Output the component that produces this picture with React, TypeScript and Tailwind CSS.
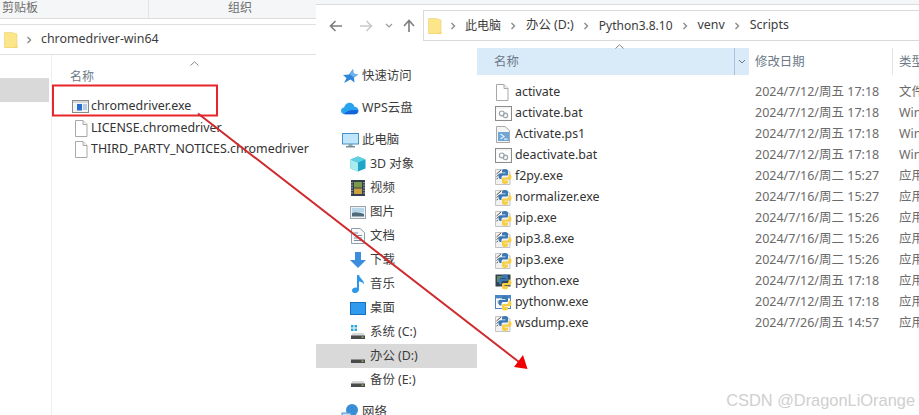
import React from "react";

const Chevron = ({ c = "#8a8a8a" }: { c?: string }) => (
  <svg width="6" height="8" viewBox="0 0 6 8" className="shrink-0"><path d="M1.5 1 L4.5 4 L1.5 7" fill="none" stroke={c} strokeWidth="1.4" /></svg>
);

const Folder = () => (
  <svg width="14" height="18" viewBox="0 0 14 18" className="shrink-0">
    <path d="M0.5 1.5 H8 L13 3 V16.5 H0.5 Z" fill="#fde68a" stroke="#e8cf7a" strokeWidth="0.6" />
    <path d="M11 14.5 H13.5 V17 H1 V16 H11 Z" fill="#f6d776" />
  </svg>
);

const Blank = () => (
  <svg width="14" height="17" viewBox="0 0 14 17"><path d="M1.5 .5 H9 L13 4.5 V16.5 H1.5 Z" fill="#fff" stroke="#a8a8a8" /><path d="M9 .5 V4.5 H13" fill="#f0f0f0" stroke="#a8a8a8" /></svg>
);

const Bat = () => (
  <svg width="17" height="15" viewBox="0 0 17 15">
    <rect x=".5" y=".5" width="16" height="14" fill="#f5f5f5" stroke="#8c8c8c" />
    <rect x="1.5" y="3" width="14" height="10.5" fill="#fff" />
    <circle cx="6.8" cy="7.4" r="2.4" fill="none" stroke="#9aa4ac" strokeWidth="1.2" />
    <circle cx="10.4" cy="9.4" r="2.2" fill="none" stroke="#9aa4ac" strokeWidth="1.2" />
  </svg>
);

const Ps = () => (
  <svg width="16" height="17" viewBox="0 0 16 17">
    <path d="M1.5 .5 H10 L14.5 4.5 V16.5 H1.5 Z" fill="#f5f5f5" stroke="#a8a8a8" />
    <rect x="3" y="6" width="11" height="9" fill="#6ea6d8" />
    <path d="M5.5 8 L9 10.5 L5.5 13 M9 13.2 H12.5" fill="none" stroke="#e6f1fa" strokeWidth="1.2" />
  </svg>
);

const Snakes = () => (
  <g>
    <path d="M10 2 C7.5 2 7 3 7 4 V5.5 H10.5 V6.2 H5.5 C4 6.2 3.5 7.5 3.5 9 C3.5 10.5 4 12 5.5 12 H6.5 V10.3 C6.5 9 7.5 8.5 8.5 8.5 H11.5 C12.5 8.5 13 8 13 7 V4 C13 3 12 2 10 2 Z" fill="#3a78b5" />
    <path d="M10 17 C12.5 17 13 16 13 15 V13.5 H9.5 V12.8 H14.5 C16 12.8 16.5 11.5 16.5 10 C16.5 8.5 16 7 14.5 7 H13.5 V8.7 C13.5 10 12.5 10.5 11.5 10.5 H8.5 C7.5 10.5 7 11 7 12 V15 C7 16 8 17 10 17 Z" fill="#f6cf45" />
  </g>
);

const PyFile = () => (
  <svg width="17" height="17" viewBox="0 0 17 17">
    <path d="M.5 1.5 H11 L15 4 V16.5 H.5 Z" fill="#f1f1f1" stroke="#c4c4c4" />
    <path d="M1.5 6 L6 2 M1.5 8.5 L4 6.5 M1.5 11 L3 10" stroke="#555" strokeWidth="1" />
    <g transform="translate(0,-1)"><Snakes /></g>
  </svg>
);

const PyExe = () => (
  <svg width="17" height="16" viewBox="0 0 17 16">
    <rect x=".5" y=".5" width="15" height="12" fill="#33424e" />
    <path d="M2 3 H7 M2 5 H5 M2 7 H4" stroke="#8fd08f" strokeWidth="1" />
    <g transform="translate(0,-1.5)"><Snakes /></g>
  </svg>
);

const PyW = () => (
  <svg width="17" height="16" viewBox="0 0 17 16">
    <rect x=".5" y=".5" width="15" height="13" fill="#fff" stroke="#4a86c5" />
    <rect x="1" y="1" width="14" height="2.4" fill="#4a86c5" />
    <path d="M2.5 6 H6 M2.5 8 H4.5" stroke="#888" strokeWidth="1" />
    <g transform="translate(0,-1.5)"><Snakes /></g>
  </svg>
);

const ExeIcon = () => (
  <svg width="17" height="13" viewBox="0 0 17 13">
    <rect x=".5" y=".5" width="16" height="12" fill="#f4f4f4" stroke="#8a8a8a" />
    <rect x="1" y="1" width="15" height="2" fill="#d8d8d8" />
    <rect x="5" y="4" width="5" height="6.5" fill="#2a6fd0" />
    <path d="M11 5 H15 M11 7 H15 M11 9 H15" stroke="#7aa8dc" strokeWidth="1" />
  </svg>
);

const Drive = ({ win }: { win?: boolean }) => (
  <svg width="16" height="16" viewBox="0 0 16 16">
    {win && <path d="M1 1 H3.5 V3.5 H1 Z M4.5 1 H7 V3.5 H4.5 Z M1 4.5 H3.5 V7 H1 Z M4.5 4.5 H7 V7 H4.5 Z" fill="#28a8d8" />}
    <path d="M2.5 9 H13.5 L15 12 H1 Z" fill="#d8d8d8" />
    <rect x="1" y="11.5" width="14" height="3.5" fill="#4a4a4a" />
    <rect x="11.5" y="12.5" width="2" height="1.2" fill="#9ad06a" />
  </svg>
);

type NI = { label: string; icon: React.ReactNode; indent?: boolean; active?: boolean; gap?: boolean };

const nav: NI[] = [
  { label: "快速访问", icon: <svg width="17" height="16" viewBox="0 0 17 16"><path d="M11 1 L11.5 5.5 L16 6.5 L12 9.5 L12.5 14.5 L8.5 11.5 L2 15 L4.5 10 L1 7 L7 6.5 Z" fill="#2f86d8" /><path d="M11 1 L11.5 5.5 L16 6.5 L12 9.5 L8 6.5 Z" fill="#6db4ee" /></svg> },
  { label: "WPS云盘", gap: true, icon: <svg width="18" height="13" viewBox="0 0 20 14"><path d="M5 13.5 C1.5 13.5 0 11.5 0 9.5 C0 7.5 1.5 6 3.5 6 C4 3 6.5 .5 9.5 .5 C12.5 .5 14.5 2.5 15 5 C17.5 5 19.5 7 19.5 9.5 C19.5 12 17.5 13.5 15 13.5 Z" fill="#2aa3ef" /><path d="M3 13 C7 9 12 8 19 9 C19 12 17.5 13.5 15 13.5 H5 Z" fill="#1764d8" /></svg> },
  { label: "此电脑", gap: true, icon: <svg width="17" height="15" viewBox="0 0 17 15"><rect x=".5" y=".5" width="16" height="10.5" fill="#bfe6fb" stroke="#4a90c8" /><rect x="6.5" y="11" width="4" height="2" fill="#8aa" /><rect x="4" y="13" width="9" height="1.5" fill="#7d8c96" /></svg> },
  { label: "3D 对象", indent: true, icon: <svg width="16" height="16" viewBox="0 0 16 16"><path d="M8 .5 L15.5 3.5 V12.5 L8 15.5 L.5 12.5 V3.5 Z" fill="#1fa5c8" /><path d="M.5 3.5 L8 6.5 V15.5 L.5 12.5 Z" fill="#a8ecf2" /><path d="M8 .5 L15.5 3.5 L8 6.5 L.5 3.5 Z" fill="#5fd0e2" /></svg> },
  { label: "视频", indent: true, icon: <svg width="14" height="16" viewBox="0 0 14 16"><rect width="14" height="16" fill="#33404c" /><rect x="3" y="2" width="8" height="5.5" fill="#7a9a4a" /><rect x="3" y="8.5" width="8" height="5.5" fill="#c8a040" /><path d="M1 2 V14 M13 2 V14" stroke="#dde" strokeWidth="1" strokeDasharray="1.2 1.4" /></svg> },
  { label: "图片", indent: true, icon: <svg width="16" height="13" viewBox="0 0 16 13"><rect x=".5" y=".5" width="15" height="12" fill="#eef2f5" stroke="#9aa5ad" /><rect x="2" y="2" width="12" height="4.5" fill="#b8d6ea" /><path d="M2 10.5 V7 C6 5.5 10 7 14 8 V10.5 Z" fill="#4f6b7a" /></svg> },
  { label: "文档", indent: true, icon: <svg width="14" height="16" viewBox="0 0 14 16"><path d="M.5 .5 H9 L13.5 4.5 V15.5 H.5 Z" fill="#f8f8f8" stroke="#8aa0b5" /><path d="M3 5 H7 M3 7.5 H11 M3 10 H11 M3 12.5 H11" stroke="#7a8fa5" strokeWidth="1" /></svg> },
  { label: "下载", indent: true, icon: <svg width="16" height="16" viewBox="0 0 16 16"><path d="M5 0 H11 V8 H16 L8 16 L0 8 H5 Z" fill="#3b8ede" /></svg> },
  { label: "音乐", indent: true, icon: <svg width="13" height="18" viewBox="0 0 13 18"><path d="M5 0 H7 C7.5 3.5 12.5 5 12 9.5 C11 7.5 9 6.5 7 6.5 V14.5 C7 16.5 5 18 3 18 C1 18 0 16.8 0 15.4 C0 13.8 1.8 12.5 3.5 12.5 C4 12.5 4.6 12.6 5 12.9 Z" fill="#2d97e8" /></svg> },
  { label: "桌面", indent: true, icon: <svg width="16" height="13" viewBox="0 0 16 13"><rect x=".5" y=".5" width="15" height="12" fill="#2f9bef" stroke="#1670c0" /></svg> },
  { label: "系统 (C:)", indent: true, icon: <Drive win /> },
  { label: "办公 (D:)", indent: true, active: true, icon: <Drive /> },
  { label: "备份 (E:)", indent: true, icon: <Drive /> },
  { label: "网络", gap: true, icon: <svg width="18" height="16" viewBox="0 0 18 16"><circle cx="11" cy="6" r="6" fill="#3a8ed8" /><rect x="1" y="9" width="9" height="6" fill="#bfe0f6" stroke="#4a90c8" /></svg> },
];

const files: [string, React.ReactNode, string, string][] = [
  ["activate", <Blank />, "2024/7/12/周五 17:18", "文件"],
  ["activate.bat", <Bat />, "2024/7/12/周五 17:18", "Win"],
  ["Activate.ps1", <Ps />, "2024/7/12/周五 17:18", "Win"],
  ["deactivate.bat", <Bat />, "2024/7/12/周五 17:18", "Win"],
  ["f2py.exe", <PyFile />, "2024/7/16/周二 15:27", "应用"],
  ["normalizer.exe", <PyFile />, "2024/7/16/周二 15:27", "应用"],
  ["pip.exe", <PyFile />, "2024/7/16/周二 15:26", "应用"],
  ["pip3.8.exe", <PyFile />, "2024/7/16/周二 15:26", "应用"],
  ["pip3.exe", <PyFile />, "2024/7/16/周二 15:26", "应用"],
  ["python.exe", <PyExe />, "2024/7/12/周五 17:18", "应用"],
  ["pythonw.exe", <PyW />, "2024/7/12/周五 17:18", "应用"],
  ["wsdump.exe", <PyFile />, "2024/7/26/周五 14:57", "应用"],
];

const leftFiles: [string, React.ReactNode][] = [
  ["chromedriver.exe", <ExeIcon />],
  ["LICENSE.chromedriver", <Blank />],
  ["THIRD_PARTY_NOTICES.chromedriver", <Blank />],
];

const Caret = () => (
  <svg width="9" height="5" viewBox="0 0 9 5"><path d="M.5 4.5 L4.5 .8 L8.5 4.5" fill="none" stroke="#888" /></svg>
);

export default function App() {
  return (
    <div className="relative flex w-[919px] h-[415px] overflow-hidden bg-white text-[12.4px] text-[#333] font-['Noto_Sans','Noto_Sans_CJK_SC',sans-serif]">
      {/* left window */}
      <div className="w-[316px] shrink-0 flex flex-col">
        <div className="h-[19px] bg-[#f5f6f7] border-b border-[#dcdcdc] flex text-[#6e6e6e] text-[12px] leading-[15px]">
          <div className="w-[149px] pl-[2px] border-r border-[#e2e3e4]">剪贴板</div>
          <div className="flex-1 pl-[79px]">组织</div>
        </div>
        <div className="mt-[5px] h-[31px] border-y border-[#e0e0e0] flex items-center pl-[4px]">
          <Folder />
          <div className="ml-[8px] mr-[9px]"><Chevron /></div>
          <span className="text-[#3c3c3c]">chromedriver-win64</span>
        </div>
        <div className="flex flex-1 min-h-0">
          <div className="w-[52px] shrink-0 border-r border-[#eeeeee] pt-[23px]">
            <div className="w-[49px] h-[24px] bg-[#d9d9d9]" />
          </div>
          <div className="flex-1 min-w-0 pl-[18px]">
            <div className="h-[6px] pt-[6px] pl-[120px]"><Caret /></div>
            <div className="h-[32px] pt-[7px] text-[12px] text-[#6d7a88] leading-[18px]">名称</div>
            <div className="mt-[3px]">
              {leftFiles.map(([n, ic]) => (
                <div key={n} className="h-[21.5px] flex items-center whitespace-nowrap">
                  <div className="w-[21px] shrink-0 flex justify-center">{ic}</div>
                  <span className="text-[#333]">{n}</span>
                </div>
              ))}
            </div>
          </div>
        </div>
      </div>

      {/* right window */}
      <div className="flex-1 min-w-0 flex flex-col">
        <div className="h-[5px] bg-[#f5f6f7] border-b border-[#dcdcdc]" />
        <div className="h-[31px] mt-[5px] flex">
          <div className="w-[107px] flex items-center pl-[13px]">
            <svg width="14" height="12" viewBox="0 0 14 12"><path d="M13 6 H2 M6.5 1 L1.5 6 L6.5 11" fill="none" stroke="#7d7d7d" strokeWidth="1.6" /></svg>
            <svg className="ml-[16px]" width="14" height="12" viewBox="0 0 14 12"><path d="M1 6 H12 M7.5 1 L12.5 6 L7.5 11" fill="none" stroke="#c9c9c9" strokeWidth="1.6" /></svg>
            <svg className="ml-[12px]" width="8" height="6" viewBox="0 0 8 6"><path d="M1 1 L4 4 L7 1" fill="none" stroke="#9a9a9a" strokeWidth="1.2" /></svg>
            <svg className="ml-[10px]" width="12" height="14" viewBox="0 0 12 14"><path d="M6 13 V2 M1 7 L6 1.5 L11 7" fill="none" stroke="#7d7d7d" strokeWidth="1.6" /></svg>
          </div>
          <div className="flex-1 border-y border-l border-[#d9d9d9] flex items-center pl-[4px] whitespace-nowrap text-[#3c3c3c]">
            <Folder />
            <div className="ml-[8px] mr-[9px]"><Chevron /></div>
            <span className="text-[12px]">此电脑</span>
            <div className="ml-[9px] mr-[10px]"><Chevron /></div>
            <span>办公 (D:)</span>
            <div className="ml-[9px] mr-[10px]"><Chevron /></div>
            <span className="text-[12px]">Python3.8.10</span>
            <div className="ml-[9px] mr-[10px]"><Chevron /></div>
            <span>venv</span>
            <div className="ml-[9px] mr-[10px]"><Chevron /></div>
            <span>Scripts</span>
          </div>
        </div>
        <div className="flex flex-1 min-h-0 mt-[7px]">
          <div className="w-[161px] shrink-0 pt-[16px] text-[#3c3c3c]">
            {nav.map((n) => (
              <div
                key={n.label}
                className={`h-[24px] flex items-center whitespace-nowrap ${n.gap ? "mt-[8px]" : ""} ${n.active ? "bg-[#d9d9d9]" : ""} ${n.indent ? "pl-[32px]" : "pl-[24px]"}`}
              >
                <div className="w-[20px] shrink-0 flex justify-center">{n.icon}</div>
                <span className="ml-[2px]">{n.label}</span>
              </div>
            ))}
          </div>
          <div className="flex-1 min-w-0">
            <div className="flex h-[27px] text-[12.4px] text-[#6d7a88] leading-[27px] whitespace-nowrap">
              <div className="relative w-[272px] shrink-0 bg-[#d9ebf9] pl-[17px]">
                名称
                <div className="absolute left-[138px] top-[-4px] leading-none"><Caret /></div>
                <div className="absolute right-0 top-0 w-[15px] h-full border-l border-[#a9c4d8] flex items-center justify-center">
                  <svg width="8" height="5" viewBox="0 0 8 5"><path d="M1 1 L4 4 L7 1" fill="none" stroke="#6d7a88" /></svg>
                </div>
              </div>
              <div className="w-[144px] shrink-0 pl-[6px] border-r border-[#e5e5e5]">修改日期</div>
              <div className="pl-[6px]">类型</div>
            </div>
            <div className="mt-[7px]">
              {files.map(([n, ic, d, t]) => (
                <div key={n} className="h-[21px] flex items-center whitespace-nowrap">
                  <div className="w-[38px] shrink-0 flex pl-[18px]">{ic}</div>
                  <span className="w-[240px] shrink-0 text-[#333]">{n}</span>
                  <span className="w-[144px] shrink-0 text-[#6b6b6b] text-[12.5px]">{d}</span>
                  <span className="text-[#6b6b6b]">{t}</span>
                </div>
              ))}
            </div>
          </div>
        </div>
      </div>

      {/* annotation */}
      <svg className="absolute left-0 top-0 pointer-events-none" width="919" height="415" viewBox="0 0 919 415">
        <rect x="53" y="85.5" width="164" height="30" fill="none" stroke="#e8262a" strokeWidth="2" />
        <path d="M198 113.5 L519 362" stroke="#cf2a2e" strokeWidth="2" />
        <path d="M527.5 369 L514 367 L523 355 Z" fill="#f00000" />
      </svg>
      <div className="absolute right-[4px] bottom-[6px] text-[16.4px] leading-[18px] text-[#cfcfcf] font-['Liberation_Sans',sans-serif]">CSDN @DragonLiOrange</div>
    </div>
  );
}
